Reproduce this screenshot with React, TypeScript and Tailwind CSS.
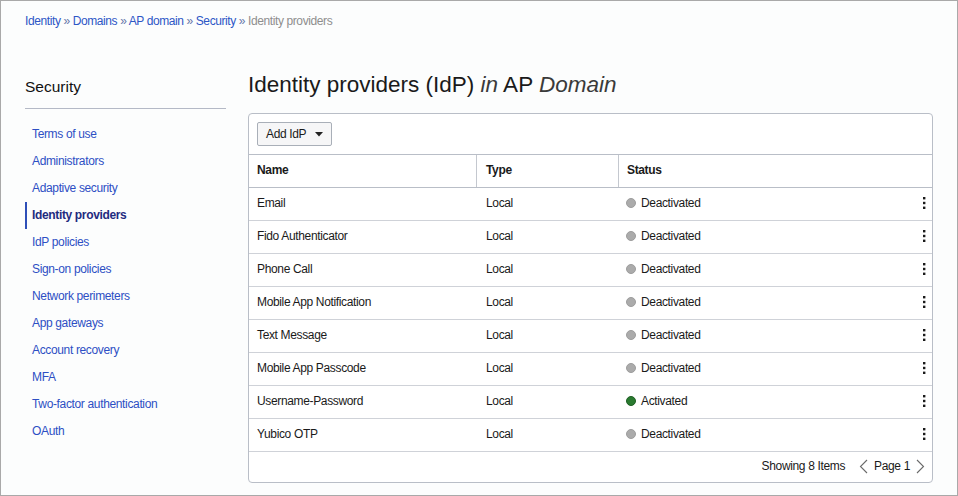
import React from 'react';

const navItems = [
  'Terms of use',
  'Administrators',
  'Adaptive security',
  'Identity providers',
  'IdP policies',
  'Sign-on policies',
  'Network perimeters',
  'App gateways',
  'Account recovery',
  'MFA',
  'Two-factor authentication',
  'OAuth',
];

const providers = [
  { name: 'Email', type: 'Local', active: false },
  { name: 'Fido Authenticator', type: 'Local', active: false },
  { name: 'Phone Call', type: 'Local', active: false },
  { name: 'Mobile App Notification', type: 'Local', active: false },
  { name: 'Text Message', type: 'Local', active: false },
  { name: 'Mobile App Passcode', type: 'Local', active: false },
  { name: 'Username-Password', type: 'Local', active: true },
  { name: 'Yubico OTP', type: 'Local', active: false },
];

const Kebab = () => (
  <svg width="4" height="14" viewBox="0 0 4 14" aria-hidden="true">
    <rect x="1" y="1" width="2.4" height="2.4" fill="#1a1a1a" />
    <rect x="1" y="5.8" width="2.4" height="2.4" fill="#1a1a1a" />
    <rect x="1" y="10.6" width="2.4" height="2.4" fill="#1a1a1a" />
  </svg>
);

const Chevron = ({ dir }: { dir: 'left' | 'right' }) => (
  <svg width="9" height="15" viewBox="0 0 9 15" aria-hidden="true">
    <path
      d={dir === 'left' ? 'M8 1 L1.5 7.5 L8 14' : 'M1 1 L7.5 7.5 L1 14'}
      fill="none"
      stroke="#6a6a6a"
      strokeWidth="1.1"
    />
  </svg>
);

const App: React.FC = () => {
  return (
    <div
      className="w-[958px] h-[496px] border border-[#a9a9a9] bg-[#fcfdfd] px-[24px] text-[#1a1a1a] overflow-hidden"
      style={{ fontFamily: '"Liberation Sans", Arial, sans-serif' }}
    >
      {/* Breadcrumb */}
      <div className="pt-[12px] h-[27px] text-[12px] tracking-[-0.4px] leading-[16px] text-[#2d56c6]">
        <span>Identity</span>
        <span className="text-[#6677aa]"> » </span>
        <span>Domains</span>
        <span className="text-[#6677aa]"> » </span>
        <span>AP domain</span>
        <span className="text-[#6677aa]"> » </span>
        <span>Security</span>
        <span className="text-[#6677aa]"> » </span>
        <span className="text-[#8e8e8e]">Identity providers</span>
      </div>

      <div className="flex items-start gap-[22px] mt-[42px]">
        {/* Sidebar */}
        <div className="w-[201px] shrink-0 pt-[7px]">
          <div className="text-[15.5px] leading-[20px] pb-[11px] border-b border-[#b4b9c6] text-[#111]">
            Security
          </div>
          <ul className="mt-[12px] text-[12px] tracking-[-0.35px]">
            {navItems.map((item) =>
              item === 'Identity providers' ? (
                <li
                  key={item}
                  className="h-[27px] leading-[27px] pl-[5px] border-l-2 border-[#2e4fb8] font-bold text-[#1f2b80]"
                >
                  {item}
                </li>
              ) : (
                <li key={item} className="h-[27px] leading-[27px] pl-[7px] text-[#2d4fc4]">
                  {item}
                </li>
              )
            )}
          </ul>
        </div>

        {/* Main */}
        <div className="flex-1 min-w-0">
          <h1 className="text-[22.5px] leading-[28px] pt-[1px] text-[#1a1a1a] whitespace-nowrap">
            Identity providers (IdP) <span className="italic text-[#3a3a3a]">in</span> AP{' '}
            <span className="italic text-[#3a3a3a]">Domain</span>
          </h1>

          <div className="mt-[14px] w-[685px] border border-[#b9bec7] rounded-[4px] bg-white text-[12px] tracking-[-0.35px]">
            {/* Toolbar */}
            <div className="h-[41px] border-b border-[#b9bec7] pl-[8px] pt-[8px]">
              <button className="h-[24px] px-[8px] flex items-center gap-[9px] border border-[#a9afb8] rounded-[2px] bg-[#f6f6f7] text-[#1a1a1a]">
                <span>Add IdP</span>
                <svg width="8" height="5" viewBox="0 0 8 5" aria-hidden="true">
                  <path d="M0 0 H8 L4 4.5 Z" fill="#222" />
                </svg>
              </button>
            </div>

            {/* Header */}
            <div className="grid grid-cols-[227px_142px_1fr] h-[33px] border-b border-[#b9bec7] font-bold">
              <div className="flex items-center pl-[8px] pb-[3px]">Name</div>
              <div className="flex items-center pl-[9px] pb-[3px] border-l border-[#c4c8cf]">Type</div>
              <div className="flex items-center pl-[8px] pb-[3px] border-l border-[#c4c8cf]">Status</div>
            </div>

            {/* Rows */}
            {providers.map((p) => (
              <div
                key={p.name}
                className="grid grid-cols-[227px_142px_1fr] h-[33px] border-b border-[#cfd2d8]"
              >
                <div className="flex items-center pl-[8px] pb-[3px]">{p.name}</div>
                <div className="flex items-center pl-[10px] pb-[3px]">{p.type}</div>
                <div className="flex items-center pl-[8px] pr-[6px] pb-[3px]">
                  <span
                    className={`w-[10px] h-[10px] rounded-full mr-[5px] ${
                      p.active ? 'bg-[#2a7a30] border border-[#1f5f24]' : 'bg-[#ababab] border border-[#9d9d9d]'
                    }`}
                  />
                  <span>{p.active ? 'Activated' : 'Deactivated'}</span>
                  <span className="ml-auto flex items-center">
                    <Kebab />
                  </span>
                </div>
              </div>
            ))}

            {/* Footer */}
            <div className="h-[30px] flex items-center justify-end pr-[7px] pb-[2px] text-[#1a1a1a]">
              <span>Showing 8 Items</span>
              <span className="ml-[14px] flex items-center">
                <Chevron dir="left" />
              </span>
              <span className="ml-[6px]">Page 1</span>
              <span className="ml-[6px] flex items-center">
                <Chevron dir="right" />
              </span>
            </div>
          </div>
        </div>
      </div>
    </div>
  );
};

export default App;
